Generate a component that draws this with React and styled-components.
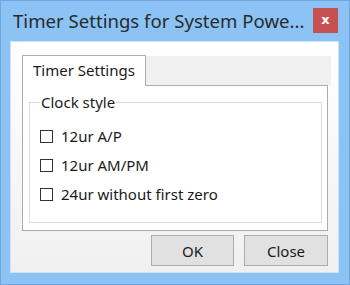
import React from "react";
import styled, { createGlobalStyle } from "styled-components";

const GlobalStyle = createGlobalStyle`
  html, body { margin: 0; padding: 0; width: 350px; height: 285px; overflow: hidden; background: #fff; }
  #root { width: 350px; height: 285px; }
  * { box-sizing: border-box; }
`;

const FONT = `"Noto Sans", "Open Sans", sans-serif`;

const Window = styled.div`
  width: 350px;
  height: 285px;
  border: 1px solid #6fa6dd;
  background: #8cc3f5;
  display: flex;
  flex-direction: column;
  font-family: ${FONT};
  overflow: hidden;
`;

const TitleBar = styled.div`
  height: 40px;
  display: flex;
  align-items: flex-start;
  padding-left: 12px;
`;

const Title = styled.div`
  flex: 1;
  min-width: 0;
  font-size: 18.6px;
  line-height: 24px;
  margin-top: 8px;
  color: #2a2a2a;
  white-space: nowrap;
`;

const CloseButton = styled.div`
  flex: none;
  width: 25px;
  height: 25px;
  margin: 7px 11px 0 0;
  background: #c75050;
  color: #fff;
  font-family: "DejaVu Sans", sans-serif;
  font-weight: bold;
  font-size: 13px;
  line-height: 1;
  display: flex;
  align-items: center;
  justify-content: center;
  padding-bottom: 2px;
`;

const Client = styled.div`
  flex: 1;
  margin: 0 10px 11px 9px;
  border: 1px solid #cfe2f6;
  background: linear-gradient(#ffffff, #f0f0f0);
  padding: 13px 10px 0 11px;
  display: flex;
  flex-direction: column;
`;

const TabControl = styled.div`
  width: 309px;
  display: flex;
  flex-direction: column;
`;

const TabStrip = styled.div`
  height: 30px;
  display: flex;
  align-items: flex-end;
  background: linear-gradient(to bottom, transparent 1px, #f0f0f0 1px);
`;

const Tab = styled.div`
  width: 124px;
  height: 31px;
  margin-bottom: -1px;
  border: 1px solid #acacac;
  border-bottom: none;
  background: #fff;
  position: relative;
  z-index: 1;
  font-size: 15px;
  color: #1a1a1a;
  padding-left: 10px;
  line-height: 28px;
`;

const Panel = styled.div`
  width: 306px;
  height: 146px;
  border: 1px solid #acacac;
  background: #fff;
  padding: 0 5px 0 6px;
`;

const Group = styled.fieldset`
  margin: 6px 0 0 0;
  height: 131px;
  border: 1px solid #dcdcdc;
  padding: 0 0 0 10px;
`;

const Legend = styled.legend`
  padding: 0 1px;
  font-size: 15px;
  line-height: 20px;
  color: #1a1a1a;
`;

const Rows = styled.div`
  display: flex;
  flex-direction: column;
  gap: 9px;
  margin-top: 14px;
`;

const Row = styled.label`
  display: flex;
  align-items: center;
  height: 20px;
  font-size: 15px;
  color: #1a1a1a;
`;

const Box = styled.span`
  width: 13px;
  height: 13px;
  border: 1px solid #333;
  background: #fff;
  margin-right: 8px;
  flex: none;
`;

const ButtonRow = styled.div`
  display: flex;
  justify-content: flex-end;
  gap: 10px;
  margin-top: 4px;
  width: 306px;
`;

const Button = styled.div`
  width: ${(p) => p.w}px;
  height: 31px;
  border: 1px solid #adadad;
  background: #e1e1e1;
  font-size: 15px;
  color: #1a1a1a;
  display: flex;
  align-items: center;
  justify-content: center;
`;

export default function App() {
  return (
    <>
      <GlobalStyle />
      <Window>
        <TitleBar>
          <Title>Timer Settings for System Powe...</Title>
          <CloseButton>x</CloseButton>
        </TitleBar>
        <Client>
          <TabControl>
            <TabStrip>
              <Tab>Timer Settings</Tab>
            </TabStrip>
            <Panel>
              <Group>
                <Legend>Clock style</Legend>
                <Rows>
                  <Row><Box />12ur A/P</Row>
                  <Row><Box />12ur AM/PM</Row>
                  <Row><Box />24ur without first zero</Row>
                </Rows>
              </Group>
            </Panel>
          </TabControl>
          <ButtonRow>
            <Button w={83}>OK</Button>
            <Button w={84}>Close</Button>
          </ButtonRow>
        </Client>
      </Window>
    </>
  );
}
